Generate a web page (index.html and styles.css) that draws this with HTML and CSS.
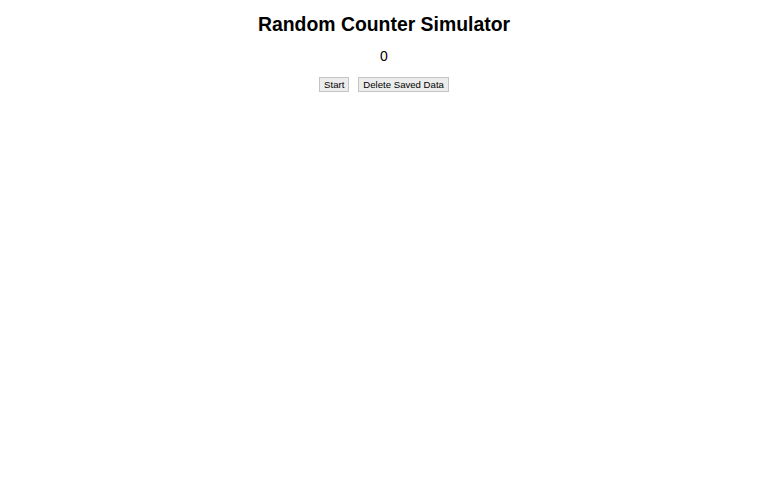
FILE: index.html
```html
<!DOCTYPE html>
<html>
<head>
<meta charset="utf-8">
<link rel="stylesheet" href="styles.css">
</head>
<body>
<div class="app">
  <h1 class="title">Random Counter Simulator</h1>
  <div class="count">0</div>
  <div class="controls">
    <button class="btn">Start</button>
    <button class="btn">Delete Saved Data</button>
  </div>
</div>
</body>
</html>
```
FILE: styles.css
```css
body {
  margin: 8px;
  font-family: "Liberation Sans", Arial, sans-serif;
  background: #fff;
  color: #000;
}
.app {
  text-align: center;
}
.title {
  font-size: 19.4px;
  font-weight: bold;
  margin: 5px 0 0;
  line-height: 22px;
}
.count {
  font-size: 14px;
  margin-top: 13px;
  line-height: 16px;
}
.controls {
  margin-top: 13px;
  display: flex;
  justify-content: center;
  gap: 9px;
}
.btn {
  font-family: "Liberation Sans", Arial, sans-serif;
  font-size: 9.6px;
  line-height: 11px;
  padding: 1px 4px;
  background: #ececec;
  border: 1px solid #c4c4c4;
  border-radius: 0;
  color: #000;
}
```
